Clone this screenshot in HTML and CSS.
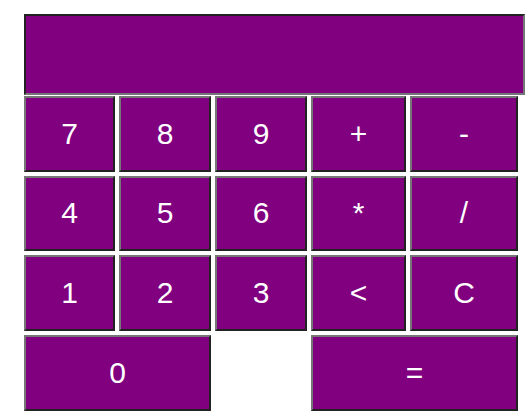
FILE: index.html
```html
<!DOCTYPE html>
<html>
<head>
<meta charset="utf-8">
<link rel="stylesheet" href="styles.css">
</head>
<body>
<div class="calc">
  <div class="display"></div>
  <div class="keys">
    <button class="key">7</button>
    <button class="key">8</button>
    <button class="key">9</button>
    <button class="key">+</button>
    <button class="key">-</button>
    <button class="key">4</button>
    <button class="key">5</button>
    <button class="key">6</button>
    <button class="key">*</button>
    <button class="key">/</button>
    <button class="key">1</button>
    <button class="key">2</button>
    <button class="key">3</button>
    <button class="key">&lt;</button>
    <button class="key">C</button>
    <button class="key zero">0</button>
    <button class="key equals">=</button>
  </div>
</div>
</body>
</html>
```
FILE: styles.css
```css
html, body {
  margin: 0;
  padding: 0;
  background: #ffffff;
}
.calc {
  padding: 14px 0 0 24px;
  width: 501px;
  font-family: "Liberation Sans", Arial, sans-serif;
}
.display {
  box-sizing: border-box;
  width: 501px;
  height: 81px;
  background: #800080;
  border: 2px solid;
  border-color: #222222 #767676 #767676 #222222;
}
.keys {
  margin-top: 1px;
  display: grid;
  grid-template-columns: 91px 92px 92px 95px 108px;
  grid-auto-rows: 75.67px;
  column-gap: 4px;
  row-gap: 4px;
}
.key {
  box-sizing: border-box;
  margin: 0;
  padding: 0;
  background: #800080;
  color: #ffffff;
  font-family: "Liberation Sans", Arial, sans-serif;
  font-size: 30px;
  font-weight: normal;
  border: 2px solid;
  border-color: #767676 #222222 #222222 #767676;
  line-height: 1;
}
.zero {
  grid-column: 1 / span 2;
}
.equals {
  grid-column: 4 / span 2;
}
```
